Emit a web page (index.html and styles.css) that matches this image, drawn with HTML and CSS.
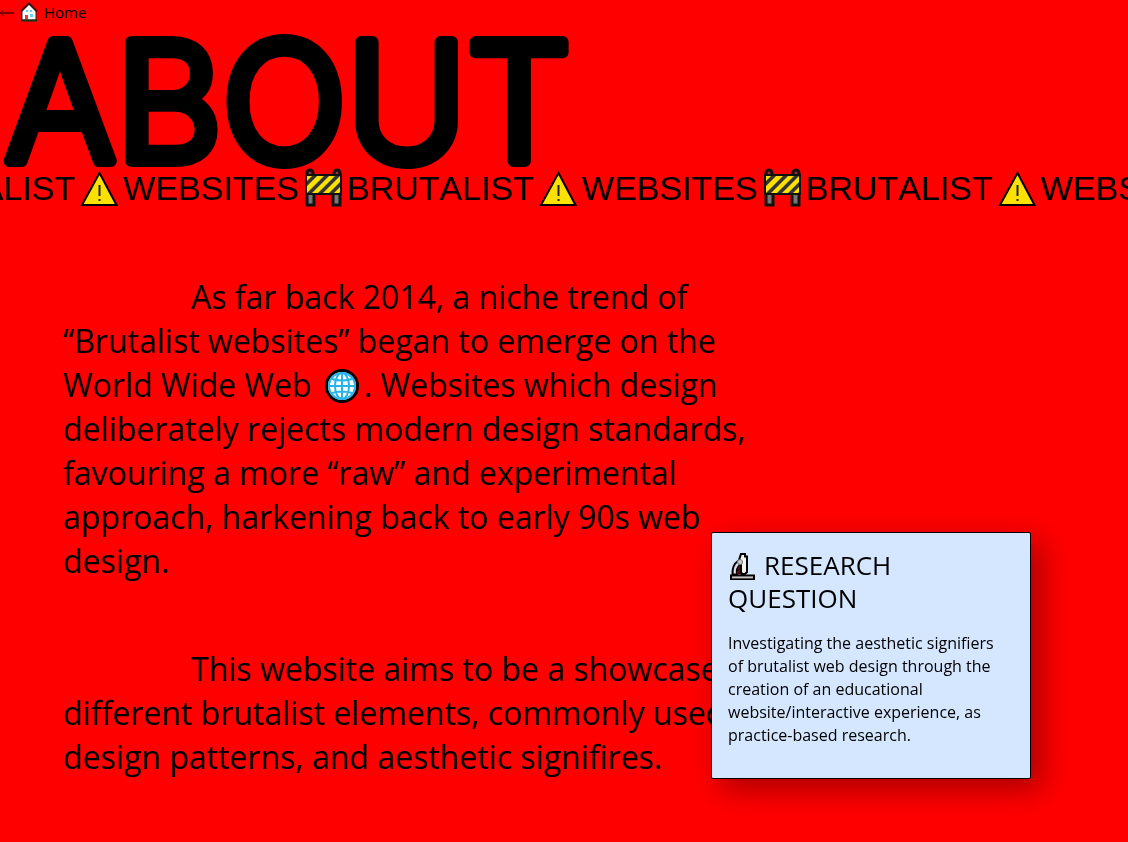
FILE: index.html
```html
<!DOCTYPE html>
<html lang="en">
<head>
<meta charset="utf-8">
<meta name="viewport" content="width=device-width, initial-scale=1">
<title>About</title>
<link rel="stylesheet" href="styles.css">
</head>
<body>
<svg class="symbols" aria-hidden="true">
  <symbol id="warning" viewBox="0 0 40 40">
    <path d="M20.500 5 37.500 37H3Z" fill="#fce000" stroke="#000" stroke-width="2"/>
    <path d="M20.500 17v11M20.500 31v2" stroke="#222" stroke-width="2" fill="none"/>
  </symbol>
  <symbol id="barrier" viewBox="0 0 40 40">
    <path d="M4 24h7v13H4ZM30 24h7v13h-7Z" fill="#777" stroke="#111" stroke-width="3"/>
    <circle cx="7" cy="5" r="3" fill="#9c3033" stroke="#111" stroke-width="3"/>
    <circle cx="34" cy="5" r="3" fill="#9c3033" stroke="#111" stroke-width="3"/>
    <path d="M3 7h35v19H3Z" fill="#fce000"/>
    <path d="M3 14 10 7h5L3 19ZM3 26 22 7h5L8 26ZM14 26 33 7h5L19 26ZM25 26 38 13v5l-8 8ZM35 26l3-3v3Z" fill="#333"/>
    <path d="M3 7h35v19H3Z" fill="none" stroke="#111" stroke-width="2"/>
  </symbol>
</svg>
<nav class="topbar">
  <a class="home" href="#"><svg class="arrow" viewBox="0 0 16 16" aria-hidden="true"><path d="M14 9H1M3 6.500.500 9 3 11.500" fill="none" stroke="#000"/></svg><svg class="house" viewBox="0 0 18 20" aria-hidden="true"><path d="M2 18V9L9 2l7 7v9Z" fill="#fff" stroke="#222"/><path d="M1 9.500 9 1.500l8 8" fill="none" stroke="#3a1212" stroke-width="2"/><path d="M6 8h2v2H6ZM10 8h2v2h-2ZM10 12h3v3h-3Z" fill="#60d5f5"/><path d="M5 13h3v5H5Z" fill="#e04030"/><path d="M1 18.500h16" stroke="#183018" stroke-width="2"/></svg>Home</a>
</nav>
<h1 class="title"><svg class="title-art" height="144" role="img" aria-label="ABOUT"><text class="title-text" x="5" y="137">ABOUT</text></svg></h1>
<div class="ticker">
  <div class="ticker-track">
    <span>BRUTALIST</span><svg class="sign"><use href="#warning"/></svg><span>WEBSITES</span><svg class="sign"><use href="#barrier"/></svg>
    <span>BRUTALIST</span><svg class="sign"><use href="#warning"/></svg><span>WEBSITES</span><svg class="sign"><use href="#barrier"/></svg>
    <span>BRUTALIST</span><svg class="sign"><use href="#warning"/></svg><span>WEBSITES</span>
  </div>
</div>
<main class="story">
  <p>As far back 2014, a niche trend of<br>“Brutalist websites” began to emerge on the<br>World Wide Web <svg class="globe" viewBox="0 0 36 36" role="img" aria-label="globe"><circle cx="18" cy="18" r="15.500" fill="#fff" stroke="#000" stroke-width="3"/><g fill="none" stroke="#28b4e8" stroke-width="2"><circle cx="18" cy="18" r="13"/><ellipse cx="18" cy="18" rx="7" ry="13"/><path d="M18 5v26M5 18h26M8 11q10 3 20 0M8 25q10-3 20 0"/></g></svg>. Websites which design<br>deliberately rejects modern design standards,<br>favouring a more “raw” and experimental<br>approach, harkening back to early 90s web<br>design.</p>
  <p>This website aims to be a showcase of<br>different brutalist elements, commonly used<br>design patterns, and aesthetic signifires.</p>
</main>
<aside class="card">
  <h2><svg class="scope" viewBox="0 0 28 28" aria-hidden="true"><path d="M10 8Q4 12 4.500 21.500h4.500Q8 15 12 12Z" fill="#d5dde6" stroke="#000" stroke-width="2"/><path d="M10 14v7.500h5V12Z" fill="#500a08"/><path d="M13 1h4v2.500h2V19l-2 2h-3l-1-2V8l-2-1Z" fill="#f4f4ee" stroke="#000" stroke-width="2"/><circle cx="12" cy="9" r="2.500" fill="#ccc" stroke="#777"/><path d="M3 22.500h23V26H3Z" fill="#eee" stroke="#000" stroke-width="2"/><path d="M4 25h21" stroke="#999"/></svg>RESEARCH<br>QUESTION</h2>
  <p>Investigating the aesthetic signifiers<br>of brutalist web design through the<br>creation of an educational<br>website/interactive experience, as<br>practice-based research.</p>
</aside>
</body>
</html>
```
FILE: styles.css
```css
* { box-sizing: border-box; }

body {
  margin: 0;
  min-height: 100vh;
  background: #f00;
  color: #000;
  font-family: "Comic Sans MS", "Open Sans", sans-serif;
  overflow-x: hidden;
}

.symbols { position: absolute; width: 0; height: 0; }

.topbar { height: 24px; font-size: 15px; font-weight: 500; line-height: 24px; }
.home { display: inline-flex; align-items: center; color: inherit; text-decoration: none; }
.arrow { width: 16px; height: 16px; margin-right: 4px; }
.house { width: 18px; height: 20px; margin-right: 6px; }

.title { margin: 0; height: 144px; }
.title-art { display: block; width: 100%; overflow: visible; }
.title-text {
  font-family: "Comic Sans MS", Inter, sans-serif;
  font-size: 164px;
  font-weight: 300;
  stroke: #000;
  stroke-width: 12px;
  stroke-linejoin: round;
}

.ticker {
  overflow: hidden;
  font-family: "Liberation Sans", Arial, sans-serif;
  font-size: 34px;
  font-kerning: none;
  line-height: 40px;
}
.ticker-track { display: flex; width: max-content; margin-left: -112px; }
.sign { width: 48px; height: 40px; }

.story { padding: 67px 63px 0; font-size: 32px; line-height: 44px; }
.story p { margin: 0 0 64px; text-indent: 128px; white-space: nowrap; }
.globe { width: 36px; height: 36px; margin: 0 4px; vertical-align: -7px; }

.card {
  position: fixed;
  right: 97px;
  bottom: 63px;
  width: 320px;
  min-height: 247px;
  padding: 16px;
  border: 1px solid #000;
  border-radius: 2px;
  background: #d5e6ff;
  box-shadow: 10px 10px 30px rgba(0, 0, 0, 0.35);
}
.card h2 { margin: 0 0 17px; font-size: 26px; font-weight: 400; line-height: 33px; }
.card p { margin: 0; font-size: 16px; font-weight: 500; line-height: 23px; white-space: nowrap; }
.scope { width: 28px; height: 28px; margin-right: 8px; vertical-align: -6px; }
```
